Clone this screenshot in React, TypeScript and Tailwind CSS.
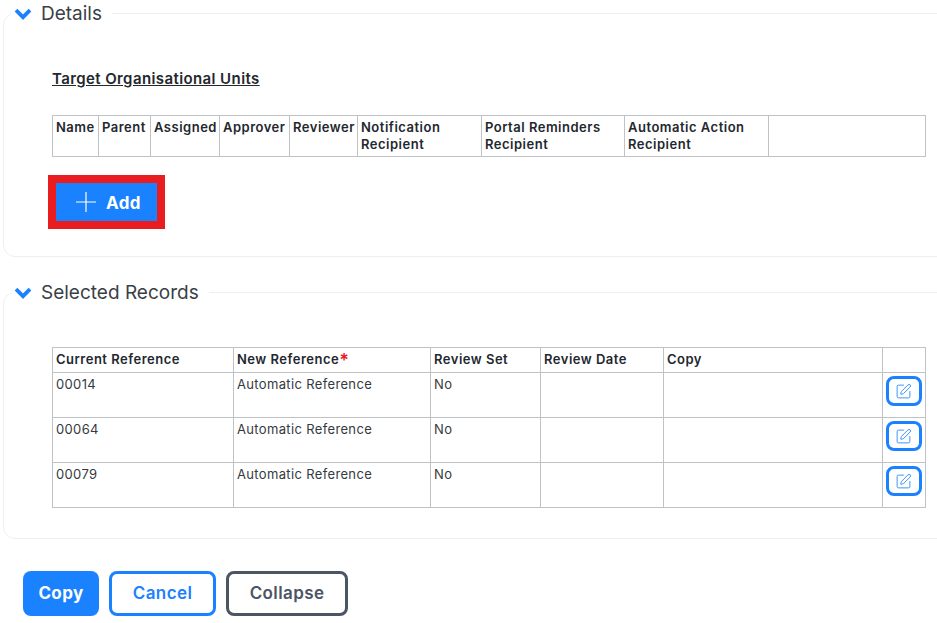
import { SquarePen } from "lucide-react";

function Legend({ title }: { title: string }) {
  return (
    <legend className="-ml-[40px] flex h-[26px] items-center pl-[3px] pr-[10px]">
      <svg width="18" height="12" viewBox="0 0 18 12" className="mr-[8px] -ml-[1px] mt-[2px]">
        <path d="M2 2.2 L9 9.2 L16 2.2" fill="none" stroke="#1a82ff" strokeWidth="3.8" />
      </svg>
      <span className="ml-[1px] pt-[1px] text-[19px] leading-[26px] text-[#3a3f47]">{title}</span>
    </legend>
  );
}

const th = "border border-[#c0c3c6] px-[3px] pt-[3px] pb-[3px] align-top text-left font-semibold text-[13px] leading-[17px] tracking-[0.5px] text-[#23272e]";
const td = "border border-[#c0c3c6] px-[3px] pt-[3px] pb-[3px] align-top font-normal text-[13px] leading-[17px] tracking-[0.35px] text-[#343a40]";

const unitCols = [46, 52, 69, 70, 68, 124, 143, 144, 157];
const unitHeads = ["Name", "Parent", "Assigned", "Approver", "Reviewer", "Notification Recipient", "Portal Reminders Recipient", "Automatic Action Recipient", ""];
const recCols = [181, 197, 110, 123, 219, 43];
const rows = ["00014", "00064", "00079"];

export default function App() {
  return (
    <div className="h-[623px] w-[937px] overflow-hidden bg-white font-['Inter',sans-serif]">
      <div className="w-[960px] pl-[3px]">
        <fieldset className="h-[257px] rounded-[12px] border border-[#eceff2] pl-[48px] pr-0">
          <Legend title="Details" />
          <h3 className="mt-[43px] w-fit text-[15px] font-semibold leading-[20px] tracking-[0.4px] text-[#23272e] underline">Target Organisational Units</h3>
          <table className="mt-[26px] w-[873px] table-fixed border-collapse">
            <colgroup>{unitCols.map((w, i) => <col key={i} style={{ width: w }} />)}</colgroup>
            <thead>
              <tr className="h-[41px]">
                {unitHeads.map((h, i) => <th key={i} className={th}>{h}</th>)}
              </tr>
            </thead>
          </table>
          <div className="mt-[18px] -ml-[4px] w-fit border-[8px] border-[#e91c1f]">
            <button className="flex h-[38px] w-[101px] items-center justify-center gap-[10px] bg-[#1a82ff] pl-[4px] pt-[4px] text-[17px] font-bold tracking-[0.4px] text-white">
              <svg width="20" height="20" viewBox="0 0 20 20" className="-mt-[4px]">
                <path d="M10 0 V20 M0 10 H20" stroke="white" strokeWidth="1.2" fill="none" />
              </svg>
              Add
            </button>
          </div>
        </fieldset>

        <fieldset className="mt-[22px] h-[260px] rounded-[12px] border border-[#eceff2] pl-[48px] pr-0">
          <Legend title="Selected Records" />
          <table className="mt-[42px] w-[873px] table-fixed border-collapse">
            <colgroup>{recCols.map((w, i) => <col key={i} style={{ width: w }} />)}</colgroup>
            <thead>
              <tr className="h-[25px]">
                <th className={th}>Current Reference</th>
                <th className={th}>New Reference<span className="align-[-3px] text-[18px] leading-[10px] text-[#e91c1f]">*</span></th>
                <th className={th}>Review Set</th>
                <th className={th}>Review Date</th>
                <th className={th}>Copy</th>
                <th className={th}></th>
              </tr>
            </thead>
            <tbody>
              {rows.map((r) => (
                <tr key={r} className="h-[45px]">
                  <td className={td}>{r}</td>
                  <td className={td}>Automatic Reference</td>
                  <td className={td}>No</td>
                  <td className={td}></td>
                  <td className={td}></td>
                  <td className={td}>
                    <button className="flex h-[30px] w-[36px] items-center justify-center rounded-[8px] border-[3px] border-[#1a82ff] pr-[2px] text-[#1a82ff]">
                      <SquarePen size={17} strokeWidth={1.2} />
                    </button>
                  </td>
                </tr>
              ))}
            </tbody>
          </table>
        </fieldset>

        <div className="mt-[32px] flex gap-[10px] pl-[20px] tracking-[0.4px]">
          <button className="h-[45px] w-[76px] rounded-[8px] bg-[#1a82ff] text-[17px] font-bold text-white">Copy</button>
          <button className="h-[45px] w-[107px] rounded-[8px] border-[3px] border-[#1a82ff] bg-white text-[17px] font-semibold text-[#1a82ff]">Cancel</button>
          <button className="h-[45px] w-[122px] rounded-[8px] border-[3px] border-[#4b5563] bg-white text-[17px] font-semibold text-[#4b5563]">Collapse</button>
        </div>
      </div>
    </div>
  );
}
